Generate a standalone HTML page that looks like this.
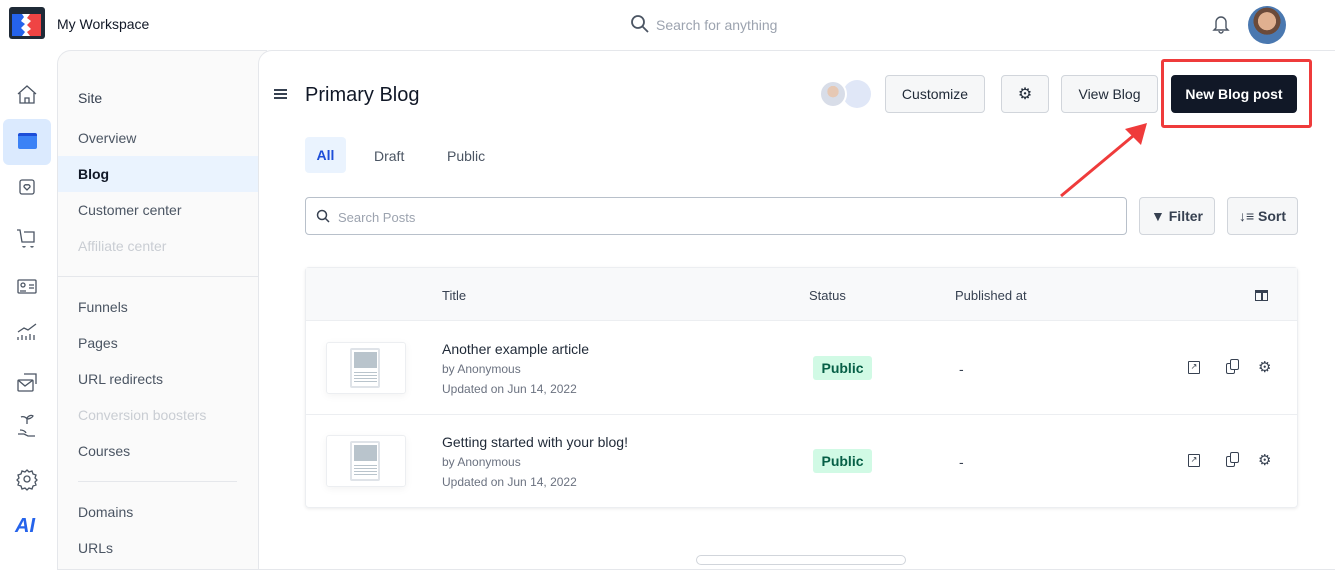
<!DOCTYPE html>
<html><head><meta charset="utf-8"><style>
*{box-sizing:border-box;margin:0;padding:0}
body{width:1335px;height:558px;overflow:hidden;background:#fff;font-family:"Liberation Sans",sans-serif;color:#1f2937;position:relative}
.abs{position:absolute}
.t{font-size:14px;color:#374151}
.btn{position:absolute;border:1px solid #d1d5db;border-radius:4px;background:#f6f7f8;font-size:14px;color:#1f2937;display:flex;align-items:center;justify-content:center}
.nav div{position:absolute;left:78px;font-size:14px;color:#4b5563}
</style></head><body>
<!-- top bar -->
<div class="abs" style="left:9px;top:7px;width:36px;height:32px;background:#1f2a37;border-radius:3px"></div>
<div class="abs" style="left:12px;top:14px;width:14px;height:22px;background:#2563eb"></div>
<div class="abs" style="left:27px;top:14px;width:14px;height:22px;background:#ef4444"></div>
<svg class="abs" style="left:18px;top:14px" width="18" height="22"><path d="M4 0h8l-3 4 4 3-4 4 4 4-4 3 3 4H4l3-4-4-4 4-4-4-3 3-4z" fill="#fff"/></svg>
<div class="abs" style="left:57px;top:16px;font-size:14px;color:#111827">My Workspace</div>
<svg class="abs" style="left:630px;top:14px" width="20" height="20" viewBox="0 0 20 20"><circle cx="8" cy="8" r="6" fill="none" stroke="#4b5563" stroke-width="1.8"/><path d="M12.5 12.5L18 18" stroke="#4b5563" stroke-width="1.8"/></svg>
<div class="abs" style="left:656px;top:17px;font-size:14px;color:#9ca3af">Search for anything</div>
<svg class="abs" style="left:1212px;top:14px" width="18" height="20" viewBox="0 0 18 20"><path d="M4 14V8a5 5 0 0110 0v6l2 2H2z M7 17a2 2 0 004 0" fill="none" stroke="#4b5563" stroke-width="1.4"/></svg>
<div class="abs" style="left:1248px;top:6px;width:38px;height:38px;border-radius:50%;background:radial-gradient(circle at 50% 40%,#e0b090 0 30%,#6b4a3a 31% 45%,#4a78b0 46%)"></div>
<!-- rail -->
<div class="abs" style="left:3px;top:119px;width:48px;height:46px;background:#dbeafe;border-radius:6px"></div>
<div class="abs" style="left:18px;top:133px;width:19px;height:16px;background:#3b82f6;border-radius:2px;border-top:3px solid #1d4ed8"></div>
<svg class="abs" style="left:16px;top:84px" width="22" height="420" viewBox="0 0 22 420" fill="none" stroke="#4b5563" stroke-width="1.3">
<path d="M2 10L11 2l9 8M4 9v10h14V9M9 19v-5h4v5"/>
<rect x="4" y="96" width="14" height="14" rx="2"/><path d="M8 103l3 3 3-3a2 2 0 00-3-2 2 2 0 00-3 2"/>
<path d="M1 146h3l2 12h12v-10h-10M7 162a1 1 0 102 0M15 162a1 1 0 102 0"/>
<rect x="2" y="196" width="18" height="13" rx="1"/><circle cx="7" cy="201" r="2"/><path d="M4 207h6M13 201h5M13 204h5"/>
<path d="M2 256v-3M6 256v-5M10 256v-4M14 256v-6M18 256v-5M2 248l6-4 4 2 8-6"/>
<rect x="2" y="296" width="15" height="11" rx="1"/><path d="M2 296l7 6 8-6M8 290h12v10"/>
<path d="M2 350h6l4 2h7M4 346c3 0 5 1 6 3M11 340v-6c2-3 5-3 6-2c-1 2-4 3-6 3c-1-2-4-3-6-2"/>
<circle cx="11" cy="395" r="3"/><path d="M11 386l2 2 3-1 1 3 3 1-1 3 2 2-2 2 1 3-3 1-1 3-3-1-2 2-2-2-3 1-1-3-3-1 1-3-2-2 2-2-1-3 3-1 1-3 3 1z"/>
</svg>
<div class="abs" style="left:15px;top:515px;font-size:20px;font-weight:bold;font-style:italic;color:#2563eb">AI</div>
<!-- secondary nav -->
<div class="abs" style="left:57px;top:50px;width:210px;height:520px;background:#fafafa;border:1px solid #e5e7eb;border-radius:14px 0 0 0"></div>
<div class="abs" style="left:58px;top:156px;width:200px;height:36px;background:#eaf3fe"></div>
<div class="abs" style="left:58px;top:276px;width:200px;height:1px;background:#e5e7eb"></div>
<div class="abs" style="left:78px;top:481px;width:159px;height:1px;background:#e5e7eb"></div>
<div class="nav">
<div style="top:90px;color:#374151">Site</div>
<div style="top:130px">Overview</div>
<div style="top:166px;color:#111827;font-weight:bold">Blog</div>
<div style="top:202px">Customer center</div>
<div style="top:238px;color:#c9cdd3">Affiliate center</div>
<div style="top:299px">Funnels</div>
<div style="top:335px">Pages</div>
<div style="top:371px">URL redirects</div>
<div style="top:407px;color:#c9cdd3">Conversion boosters</div>
<div style="top:443px">Courses</div>
<div style="top:504px">Domains</div>
<div style="top:540px">URLs</div>
</div>
<!-- main -->
<div class="abs" style="left:258px;top:50px;width:1090px;height:520px;background:#fff;border:1px solid #e5e7eb;border-radius:14px 0 0 0"></div>
<div class="abs" style="left:274px;top:89px;width:13px;height:2px;background:#374151;box-shadow:0 4px 0 #374151,0 8px 0 #374151"></div>
<div class="abs" style="left:305px;top:84px;font-size:20px;color:#111827">Primary Blog</div>
<div class="abs" style="left:843px;top:80px;width:28px;height:28px;border-radius:50%;background:#e0e7f7"></div>
<div class="abs" style="left:819px;top:80px;width:28px;height:28px;border-radius:50%;background:radial-gradient(circle at 50% 40%,#e6c8b4 0 30%,#d8dde8 31%);border:2px solid #fff"></div>
<div class="btn" style="left:885px;top:75px;width:100px;height:38px">Customize</div>
<div class="btn" style="left:1001px;top:75px;width:48px;height:38px;font-size:16px">⚙</div>
<div class="btn" style="left:1061px;top:75px;width:97px;height:38px">View Blog</div>
<div class="abs" style="left:1161px;top:59px;width:151px;height:69px;border:3px solid #ef3b3b;border-radius:3px"></div>
<div class="btn" style="left:1171px;top:75px;width:126px;height:38px;background:#111827;border-color:#111827;color:#fff;font-weight:bold">New Blog post</div>
<svg class="abs" style="left:1055px;top:115px" width="100" height="85"><path d="M6 81L84 16" stroke="#ef3b3b" stroke-width="3"/><path d="M92 8L70 14 86 30z" fill="#ef3b3b"/></svg>
<div class="abs" style="left:305px;top:137px;width:41px;height:36px;background:#eaf3fe;border-radius:4px;font-size:14px;color:#1d4ed8;font-weight:bold;text-align:center;line-height:36px">All</div>
<div class="abs t" style="left:374px;top:148px;color:#4b5563">Draft</div>
<div class="abs t" style="left:447px;top:148px;color:#4b5563">Public</div>
<div class="abs" style="left:305px;top:197px;width:822px;height:38px;border:1px solid #b8c0ca;border-radius:4px"></div>
<svg class="abs" style="left:316px;top:209px" width="14" height="14"><circle cx="6" cy="6" r="4.5" fill="none" stroke="#374151" stroke-width="1.5"/><path d="M9.5 9.5L13 13" stroke="#374151" stroke-width="1.5"/></svg>
<div class="abs" style="left:338px;top:210px;font-size:13px;color:#9ca3af">Search Posts</div>
<div class="btn" style="left:1139px;top:197px;width:76px;height:38px;font-weight:bold;color:#374151">▼ Filter</div>
<div class="btn" style="left:1227px;top:197px;width:71px;height:38px;font-weight:bold;color:#374151">↓≡ Sort</div>
<!-- table -->
<div class="abs" style="left:305px;top:267px;width:993px;height:241px;border:1px solid #eceef1;border-radius:4px;box-shadow:0 1px 3px rgba(0,0,0,.08)"></div>
<div class="abs" style="left:306px;top:268px;width:991px;height:53px;background:#f8f9fa;border-bottom:1px solid #eceef1"></div>
<div class="abs" style="left:306px;top:414px;width:991px;height:1px;background:#eceef1"></div>
<div class="abs t" style="left:442px;top:288px;font-size:13px">Title</div>
<div class="abs t" style="left:809px;top:288px;font-size:13px">Status</div>
<div class="abs t" style="left:955px;top:288px;font-size:13px">Published at</div>
<div class="abs" style="left:1255px;top:290px;width:13px;height:11px;border:1.5px solid #374151;border-top-width:3px"></div>
<div class="abs" style="left:1261px;top:290px;width:1.5px;height:11px;background:#374151"></div>

<div class="abs" style="left:326px;top:342px;width:80px;height:52px;border:1px solid #eceef1;border-radius:3px;box-shadow:0 2px 8px rgba(0,0,0,.05)"></div>
<div class="abs" style="left:350px;top:348px;width:30px;height:40px;border:2px solid #dfe3e8;border-radius:2px;background:#fff"></div>
<div class="abs" style="left:354px;top:352px;width:23px;height:16px;background:#b9c4cc"></div>
<div class="abs" style="left:354px;top:372px;width:23px;height:10px;background:repeating-linear-gradient(#b9c4cc 0 1px,#fff 1px 3px)"></div>
<div class="abs t" style="left:442px;top:341px;color:#1f2937">Another example article</div>
<div class="abs" style="left:442px;top:362px;font-size:12px;color:#6b7280">by Anonymous</div>
<div class="abs" style="left:442px;top:382px;font-size:12px;color:#6b7280">Updated on Jun 14, 2022</div>
<div class="abs" style="left:813px;top:356px;width:59px;height:24px;background:#d1fae5;border-radius:3px;font-size:14px;color:#065f46;font-weight:bold;text-align:center;line-height:24px">Public</div>
<div class="abs t" style="left:959px;top:361px">-</div>
<div class="abs" style="left:1188px;top:361px;width:12px;height:13px;border:1.5px solid #374151;border-radius:1px;font-size:8px;line-height:9px;text-align:center">↗</div>
<div class="abs" style="left:1226px;top:363px;width:9px;height:11px;border:1.5px solid #374151;border-radius:2px"></div>
<div class="abs" style="left:1230px;top:359px;width:9px;height:11px;border:1.5px solid #374151;border-radius:2px;background:#fff"></div>
<div class="abs" style="left:1258px;top:358px;font-size:15px;color:#374151">⚙</div>

<div class="abs" style="left:326px;top:435px;width:80px;height:52px;border:1px solid #eceef1;border-radius:3px;box-shadow:0 2px 8px rgba(0,0,0,.05)"></div>
<div class="abs" style="left:350px;top:441px;width:30px;height:40px;border:2px solid #dfe3e8;border-radius:2px;background:#fff"></div>
<div class="abs" style="left:354px;top:445px;width:23px;height:16px;background:#b9c4cc"></div>
<div class="abs" style="left:354px;top:465px;width:23px;height:10px;background:repeating-linear-gradient(#b9c4cc 0 1px,#fff 1px 3px)"></div>
<div class="abs t" style="left:442px;top:434px;color:#1f2937">Getting started with your blog!</div>
<div class="abs" style="left:442px;top:455px;font-size:12px;color:#6b7280">by Anonymous</div>
<div class="abs" style="left:442px;top:475px;font-size:12px;color:#6b7280">Updated on Jun 14, 2022</div>
<div class="abs" style="left:813px;top:449px;width:59px;height:24px;background:#d1fae5;border-radius:3px;font-size:14px;color:#065f46;font-weight:bold;text-align:center;line-height:24px">Public</div>
<div class="abs t" style="left:959px;top:454px">-</div>
<div class="abs" style="left:1188px;top:454px;width:12px;height:13px;border:1.5px solid #374151;border-radius:1px;font-size:8px;line-height:9px;text-align:center">↗</div>
<div class="abs" style="left:1226px;top:456px;width:9px;height:11px;border:1.5px solid #374151;border-radius:2px"></div>
<div class="abs" style="left:1230px;top:452px;width:9px;height:11px;border:1.5px solid #374151;border-radius:2px;background:#fff"></div>
<div class="abs" style="left:1258px;top:451px;font-size:15px;color:#374151">⚙</div>

<div class="abs" style="left:696px;top:555px;width:210px;height:10px;border:1px solid #d1d5db;border-radius:6px"></div>
</body></html>
